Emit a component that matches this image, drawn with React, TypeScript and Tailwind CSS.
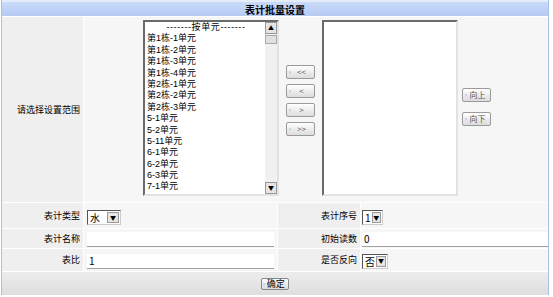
import React from 'react';

const font = { fontFamily: '"Noto Sans CJK SC", "Liberation Sans", sans-serif' };
const listFont = { fontFamily: '"Liberation Sans", "Noto Sans CJK SC", sans-serif' };

const units = [
  '-------按单元-------',
  '第1栋-1单元',
  '第1栋-2单元',
  '第1栋-3单元',
  '第1栋-4单元',
  '第2栋-1单元',
  '第2栋-2单元',
  '第2栋-3单元',
  '5-1单元',
  '5-2单元',
  '5-11单元',
  '6-1单元',
  '6-2单元',
  '6-3单元',
  '7-1单元',
];

const SmallButton: React.FC<{ label: string }> = ({ label }) => (
  <button className="w-[29px] h-[14px] flex items-center rounded-[2px] border border-[#9a9a9a] bg-gradient-to-b from-[#ffffff] to-[#dcdcdc] pl-[2px] text-[8px] leading-none text-[#555]">
    <span className="text-[6px] text-[#777]">›</span>
    <span className="flex-1 text-center pr-[2px]">{label}</span>
  </button>
);

const Select: React.FC<{ value: string; w: string }> = ({ value, w }) => (
  <div className={`${w} h-[15px] flex border border-t-[#555] border-l-[#555] border-r-[#ccc] border-b-[#ccc] bg-white`}>
    <span className="flex-1 pl-[2px] text-[10px] leading-[13px] text-black">{value}</span>
    <span className="w-[12px] m-px flex items-center justify-center bg-[#e6e6e6] border border-[#999] text-[6px] leading-none text-black">▼</span>
  </div>
);

const TextInput: React.FC<{ value?: string; w: string }> = ({ value = '', w }) => (
  <div className={`${w} h-[15px] bg-white border-b border-[#a0a0a0] pl-[2px] text-[10px] leading-[14px] text-black`}>{value}</div>
);

const ListBox: React.FC<{ items: string[]; scroll?: boolean }> = ({ items, scroll }) => (
  <div className="w-[136px] h-[176px] flex bg-white border-2 border-t-[#6a6a6a] border-l-[#6a6a6a] border-r-[#e2e2e2] border-b-[#e2e2e2] overflow-hidden">
    <div className="flex-1 pl-[2px]" style={listFont}>
      {items.map((it, i) => (
        <div
          key={it}
          className={`h-[11.4px] text-[9px] leading-[11.4px] text-black whitespace-nowrap ${i === 0 ? 'text-center tracking-[0.6px]' : ''}`}
        >
          {it}
        </div>
      ))}
    </div>
    {scroll && (
      <div className="w-[12px] flex flex-col bg-[#f0f0f0]">
        <div className="h-[12px] flex items-center justify-center bg-[#e4e4e4] border border-[#999] text-[6px] leading-none">▲</div>
        <div className="h-[9px] mt-px bg-[#e0e0e0] border border-[#aaa]" />
        <div className="flex-1" />
        <div className="h-[12px] flex items-center justify-center bg-[#e4e4e4] border border-[#999] text-[6px] leading-none">▼</div>
      </div>
    )}
  </div>
);

const Label: React.FC<{ text: string; w: string }> = ({ text, w }) => (
  <div className={`${w} bg-[#efefef] flex items-center justify-end pr-[3px] text-[9px] text-black`}>{text}</div>
);

export default function App() {
  return (
    <div className="w-[553px] h-[297px] bg-white" style={font}>
      <div className="w-[548px] ml-px h-[295px] flex flex-col border-x border-[#a8c0ea] bg-[#f4f6fb]">
        <div className="h-[3px] bg-[#e6edfa]" />
        <div className="h-[14px] flex items-center justify-center bg-gradient-to-b from-[#cadbfa] to-[#b6cbf3] text-[10px] font-bold text-black">
          表计批量设置
        </div>
        <div className="flex flex-col gap-px bg-white pt-px">
          <div className="h-[185px] flex gap-px">
            <div className="w-[81px] bg-[#efefef] flex items-center justify-end pr-[3px] text-[9px] text-black">请选择设置范围</div>
            <div className="flex-1 bg-[#f6f6f6] flex items-start pt-[3px] pl-[59px]">
              <ListBox items={units} scroll />
              <div className="w-[43px] h-[176px] flex flex-col items-center justify-center gap-[5px] pb-[15px]">
                <SmallButton label="<<" />
                <SmallButton label="<" />
                <SmallButton label=">" />
                <SmallButton label=">>" />
              </div>
              <ListBox items={[]} />
              <div className="h-[176px] flex flex-col justify-center gap-[10px] pl-[4px] pb-[3px]">
                <SmallButton label="向上" />
                <SmallButton label="向下" />
              </div>
            </div>
          </div>
          <div className="h-[25px] flex gap-px">
            <Label text="表计类型" w="w-[81px]" />
            <div className="w-[193px] bg-[#f6f6f6] flex items-center pl-[3px] pt-[4px]">
              <Select value="水" w="w-[34px]" />
            </div>
            <Label text="表计序号" w="w-[82px]" />
            <div className="flex-1 bg-[#f6f6f6] flex items-center pl-[1px] pt-[4px]">
              <Select value="1" w="w-[21px]" />
            </div>
          </div>
          <div className="h-[19px] flex gap-px">
            <Label text="表计名称" w="w-[81px]" />
            <div className="w-[193px] bg-[#f6f6f6] flex items-end pl-[3px] pb-[1px]">
              <TextInput w="w-[187px]" />
            </div>
            <Label text="初始读数" w="w-[82px]" />
            <div className="flex-1 bg-[#f6f6f6] flex items-end pl-[1px] pb-[1px]">
              <TextInput value="0" w="flex-1" />
            </div>
          </div>
          <div className="h-[22px] flex gap-px">
            <Label text="表比" w="w-[81px]" />
            <div className="w-[193px] bg-[#f6f6f6] flex items-center pl-[3px] pt-[2px]">
              <TextInput value="1" w="w-[187px]" />
            </div>
            <Label text="是否反向" w="w-[82px]" />
            <div className="flex-1 bg-[#f6f6f6] flex items-center pl-[1px] pt-[2px]">
              <Select value="否" w="w-[26px]" />
            </div>
          </div>
          <div className="h-[23px] flex items-center justify-center bg-gradient-to-b from-[#ececec] to-[#dedede]">
            <button className="w-[28px] h-[12px] flex items-center rounded-[2px] border border-[#888] bg-gradient-to-b from-white to-[#dcdcdc] pl-[1px] text-[9px] leading-none text-black">
              <span className="text-[6px] text-[#777] mr-[2px]">›</span>
              <span>确定</span>
            </button>
          </div>
        </div>
      </div>
    </div>
  );
}
